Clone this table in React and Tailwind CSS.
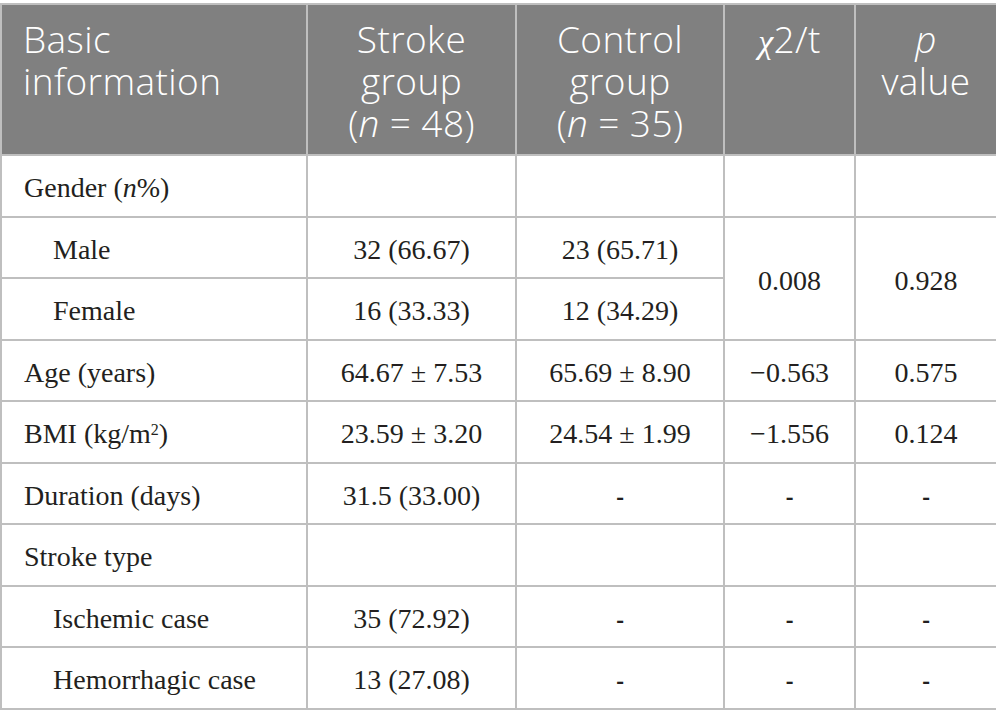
import React from 'react';

const rows = [
  { label: <>Gender (<i>n</i>%)</>, cells: ['', '', '', ''] },
  { label: 'Male', indent: true, cells: ['32 (66.67)', '23 (65.71)'], merged: ['0.008', '0.928'] },
  { label: 'Female', indent: true, cells: ['16 (33.33)', '12 (34.29)'] },
  { label: 'Age (years)', cells: ['64.67 ± 7.53', '65.69 ± 8.90', '\u22120.563', '0.575'] },
  { label: <>BMI (kg/m<sup className="text-[16px]">2</sup>)</>, cells: ['23.59 ± 3.20', '24.54 ± 1.99', '\u22121.556', '0.124'] },
  { label: 'Duration (days)', cells: ['31.5 (33.00)', '-', '-', '-'] },
  { label: 'Stroke type', cells: ['', '', '', ''] },
  { label: 'Ischemic case', indent: true, cells: ['35 (72.92)', '-', '-', '-'] },
  { label: 'Hemorrhagic case', indent: true, cells: ['13 (27.08)', '-', '-', '-'] },
];

const td = 'border-2 border-[#bfbfbf] text-center align-middle h-[61.5px] p-0 pt-[5px]';
const th = 'border-2 border-[#bfbfbf] align-top font-light pt-[13px]';

const App = () => {
  return (
    <div className="w-[996px] h-[728px] bg-white pt-[3px] overflow-hidden">
      <table className="table-fixed border-collapse w-[996px]">
        <colgroup>
          <col className="w-[306px]" />
          <col className="w-[209px]" />
          <col className="w-[208px]" />
          <col className="w-[131px]" />
          <col className="w-[142px]" />
        </colgroup>
        <thead>
          <tr className="bg-[#808080] text-white font-['Open_Sans',sans-serif] text-[37px] leading-[42px] tracking-[0.4px] font-light">
            <th className={`${th} h-[151px] text-left pl-[21px]`}>
              Basic<br />information
            </th>
            <th className={`${th} text-center`}>
              Stroke<br />group<br />(<i>n</i> = 48)
            </th>
            <th className={`${th} text-center`}>
              Control<br />group<br />(<i>n</i> = 35)
            </th>
            <th className={`${th} text-center`}>
              <i className="font-['Liberation_Serif',serif] text-[34px]">χ</i>2/t
            </th>
            <th className={`${th} text-center`}>
              <i>p</i><br />value
            </th>
          </tr>
        </thead>
        <tbody className="font-['Liberation_Serif',serif] text-[28px] text-[#231f20]">
          {rows.map((r, i) => (
            <tr key={i}>
              <td className={`${td} text-left ${r.indent ? 'pl-[51px]' : 'pl-[22px]'}`}>{r.label}</td>
              {r.cells.map((c, j) => (
                <td key={j} className={td}>
                  {c === '-' ? <span className="font-['Open_Sans',sans-serif] font-semibold text-[24px]">-</span> : c}
                </td>
              ))}
              {r.merged && r.merged.map((m, j) => (
                <td key={'m' + j} rowSpan={2} className={td}>{m}</td>
              ))}
            </tr>
          ))}
        </tbody>
      </table>
    </div>
  );
};

export default App;
